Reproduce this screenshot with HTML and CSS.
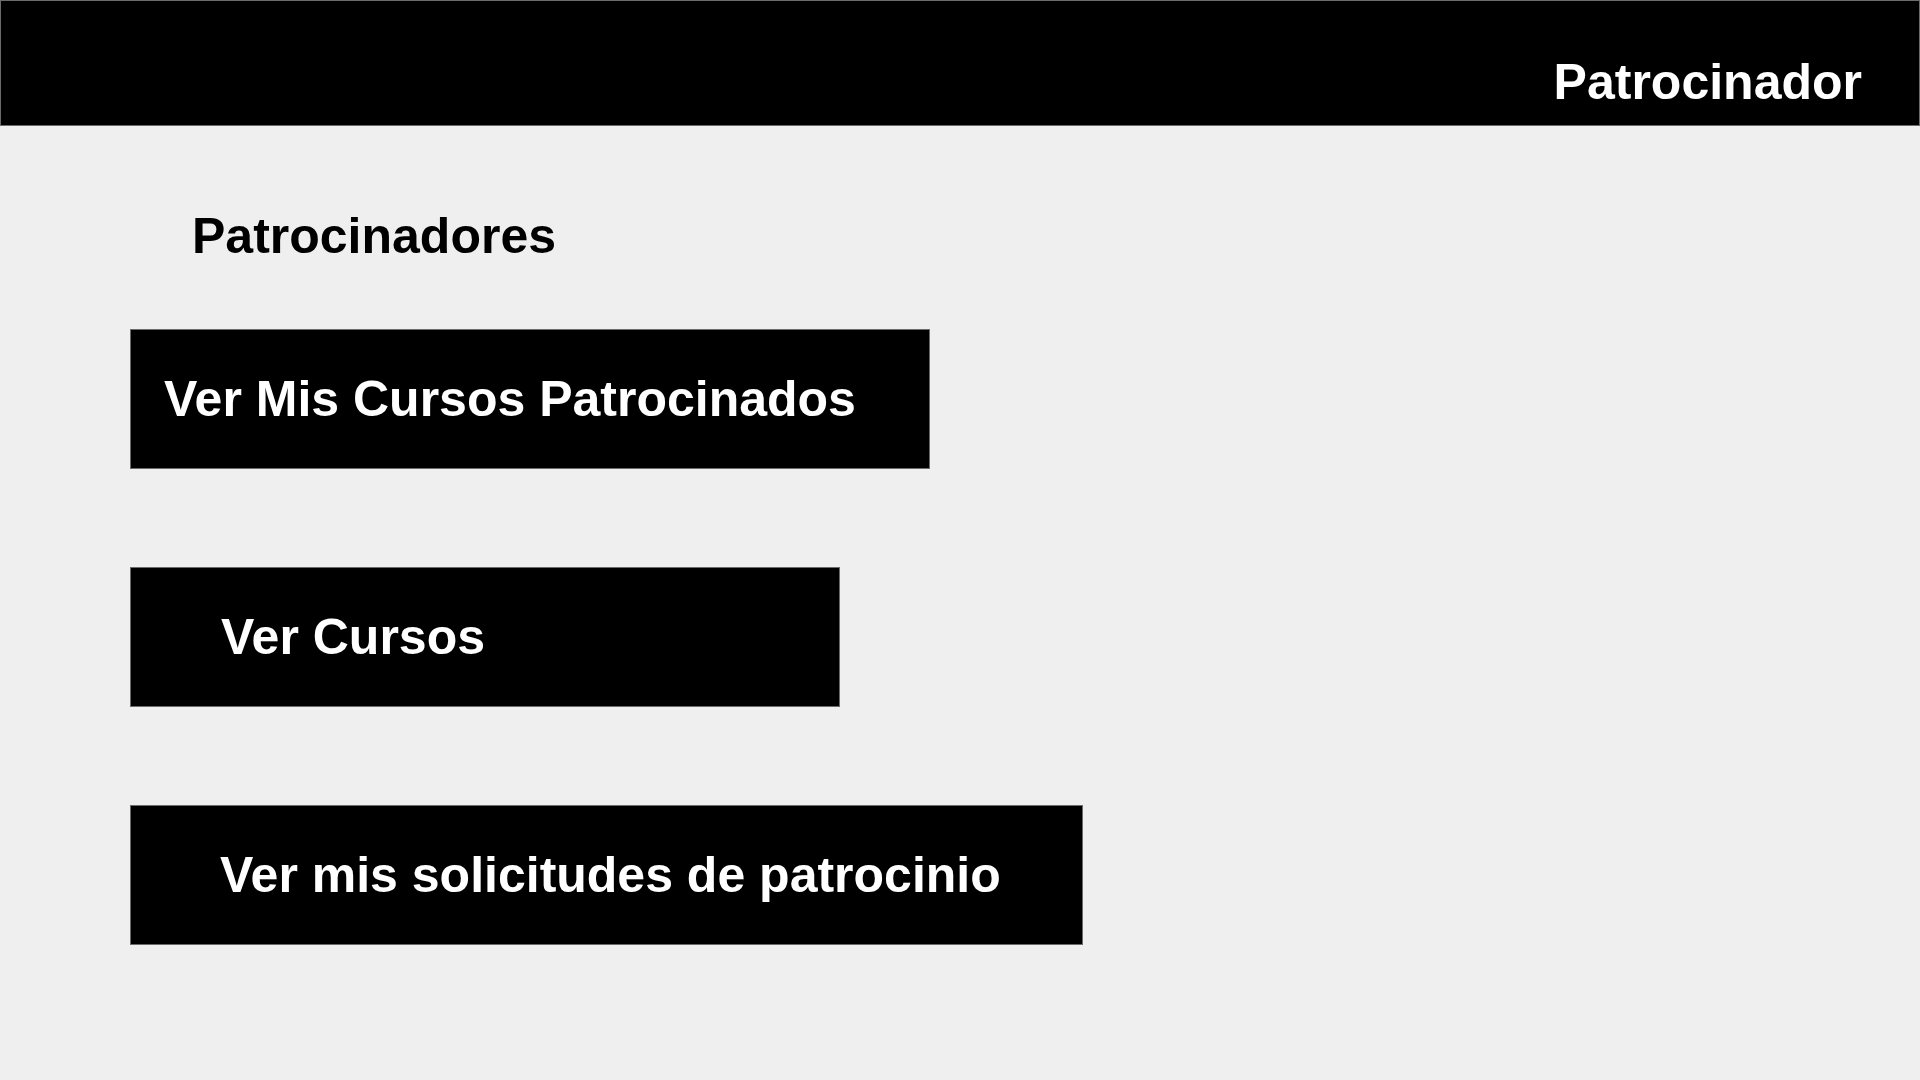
FILE: index.html
```html
<!DOCTYPE html>
<html lang="es">
<head>
<meta charset="utf-8">
<title>Patrocinador</title>
<link rel="stylesheet" href="styles.css">
</head>
<body>
<header class="topbar">
  <span class="topbar-title">Patrocinador</span>
</header>
<main class="content">
  <h1 class="page-title">Patrocinadores</h1>
  <div class="actions">
    <button class="action action-mis">Ver Mis Cursos Patrocinados</button>
    <button class="action action-cursos">Ver Cursos</button>
    <button class="action action-solicitudes">Ver mis solicitudes de patrocinio</button>
  </div>
</main>
</body>
</html>
```
FILE: styles.css
```css
* { box-sizing: border-box; }
html, body {
  margin: 0;
  padding: 0;
  background: #efefef;
  font-family: "Liberation Sans", Arial, sans-serif;
  font-weight: bold;
}
.topbar {
  height: 126px;
  background: #000;
  border: 1px solid #6b6b6b;
  display: flex;
  justify-content: flex-end;
  align-items: flex-start;
  padding: 53px 57px 0 0;
}
.topbar-title {
  color: #fff;
  font-size: 50px;
  line-height: 56px;
}
.content {
  padding: 0;
}
.page-title {
  margin: 82px 0 0 192px;
  font-size: 50px;
  line-height: 56px;
  font-weight: bold;
  color: #000;
}
.actions {
  display: flex;
  flex-direction: column;
  align-items: flex-start;
  gap: 98px;
  margin-top: 65px;
  padding-left: 130px;
}
.action {
  height: 140px;
  background: #000;
  color: #fff;
  border: 1px solid #6b6b6b;
  font-family: "Liberation Sans", Arial, sans-serif;
  font-weight: bold;
  font-size: 50px;
  line-height: 56px;
  display: flex;
  align-items: center;
  text-align: left;
  margin: 0;
  cursor: pointer;
}
.action-mis { width: 800px; padding-left: 33px; }
.action-cursos { width: 710px; padding-left: 90px; }
.action-solicitudes { width: 953px; padding-left: 89px; }
```
